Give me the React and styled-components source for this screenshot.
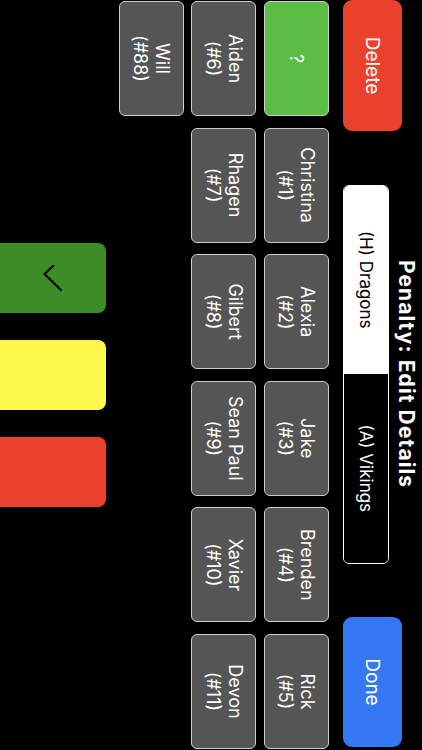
import React from "react";
import styled, { createGlobalStyle } from "styled-components";

const Global = createGlobalStyle`
  html, body {
    margin: 0;
    padding: 0;
    background: #000;
    overflow: hidden;
  }
  body {
    font-family: Inter, "Liberation Sans", sans-serif;
  }
  * { box-sizing: border-box; }
`;

const Screen = styled.div`
  width: 422px;
  height: 750px;
  overflow: hidden;
  background: #000;
`;

/* The app is a landscape layout shown rotated a quarter turn clockwise */
const Landscape = styled.div`
  width: 750px;
  height: 422px;
  transform-origin: top left;
  transform: translateX(422px) rotate(90deg);
  display: flex;
  flex-direction: column;
  color: #fff;
`;

const Header = styled.header`
  display: flex;
  align-items: flex-end;
  justify-content: space-between;
  height: 79px;
  padding-right: 3px;
`;

const ActionButton = styled.button`
  width: ${(p) => p.$w}px;
  height: 59px;
  border: none;
  border-radius: 9px;
  background: ${(p) => p.$bg};
  color: #fff;
  font-family: Inter, "Liberation Sans", sans-serif;
  font-size: 19px;
  font-weight: 400;
  padding: 0;
`;

const Center = styled.div`
  width: 379px;
  height: 79px;
  display: flex;
  flex-direction: column;
  align-items: center;
  justify-content: space-between;
`;

const Title = styled.h1`
  margin: 3px 0 0;
  font-size: 21px;
  line-height: 25px;
  letter-spacing: 1.1px;
  font-weight: 700;
  color: #fff;
`;

const Segmented = styled.div`
  display: flex;
  width: 100%;
  height: 46px;
  border: 1px solid #fff;
  border-radius: 6px;
  overflow: hidden;
`;

const Segment = styled.div`
  flex: 1;
  display: flex;
  align-items: center;
  justify-content: center;
  background: ${(p) => (p.$active ? "#fff" : "#000")};
  color: ${(p) => (p.$active ? "#000" : "#fff")};
  font-size: 17px;
`;

const Roster = styled.div`
  display: grid;
  grid-template-columns: repeat(6, 115px);
  grid-auto-rows: 65px;
  column-gap: 11.6px;
  row-gap: 7.5px;
  margin-top: 14px;
  padding-left: 1px;
`;

const Tile = styled.button`
  display: flex;
  flex-direction: column;
  align-items: center;
  justify-content: center;
  padding: 0;
  border: 1px solid #cfcfcf;
  border-radius: 6px;
  background: ${(p) => (p.$green ? "#5cbd46" : "#555556")};
  color: #fff;
  font-family: Inter, "Liberation Sans", sans-serif;
  font-size: 18px;
  line-height: 22px;
  font-weight: 400;
`;

const CardBar = styled.div`
  display: flex;
  justify-content: center;
  gap: 27px;
  margin-top: 13px;
`;

const Card = styled.button`
  width: 70px;
  height: 106px;
  border: none;
  border-radius: 8px 8px 0 0;
  background: ${(p) => p.$bg};
  display: flex;
  align-items: center;
  justify-content: center;
  padding: 0;
`;

const players = [
  { name: "?", green: true },
  { name: "Christina", num: 1 },
  { name: "Alexia", num: 2 },
  { name: "Jake", num: 3 },
  { name: "Brenden", num: 4 },
  { name: "Rick", num: 5 },
  { name: "Aiden", num: 6 },
  { name: "Rhagen", num: 7 },
  { name: "Gilbert", num: 8 },
  { name: "Sean Paul", num: 9 },
  { name: "Xavier", num: 10 },
  { name: "Devon", num: 11 },
  { name: "Will", num: 88 },
];

const Check = () => (
  <svg width="26" height="19" viewBox="0 0 26 19" fill="none">
    <polyline
      points="1,9 9,17.5 25,1"
      stroke="#000"
      strokeWidth="2.2"
      strokeLinecap="square"
      strokeLinejoin="miter"
    />
  </svg>
);

export default function App() {
  return (
    <Screen>
      <Global />
      <Landscape>
        <Header>
          <ActionButton $w={131} $bg="#e9412b">
            Delete
          </ActionButton>
          <Center>
            <Title>Penalty: Edit Details</Title>
            <Segmented>
              <Segment $active>(H) Dragons</Segment>
              <Segment>(A) Vikings</Segment>
            </Segmented>
          </Center>
          <ActionButton $w={130} $bg="#3478f6">
            Done
          </ActionButton>
        </Header>
        <Roster>
          {players.map((p) => (
            <Tile key={p.name} $green={p.green}>
              <span>{p.name}</span>
              {p.num !== undefined && <span>(#{p.num})</span>}
            </Tile>
          ))}
        </Roster>
        <CardBar>
          <Card $bg="#3c8c28">
            <Check />
          </Card>
          <Card $bg="#fef94c" />
          <Card $bg="#e9412b" />
        </CardBar>
      </Landscape>
    </Screen>
  );
}
